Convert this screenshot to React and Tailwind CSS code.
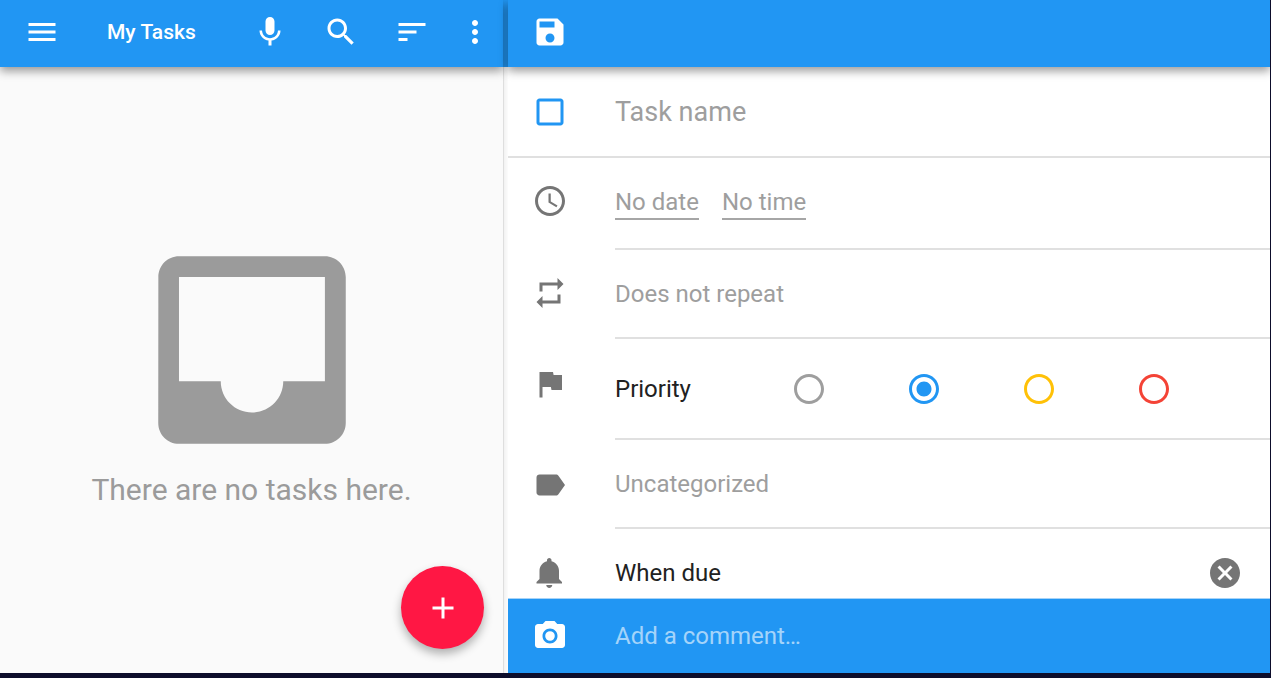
const PATHS = {
  menu: "M3 18h18v-2H3v2zm0-5h18v-2H3v2zm0-7v2h18V6H3z",
  mic: "M12 14c1.66 0 2.99-1.34 2.99-3L15 5c0-1.66-1.34-3-3-3S9 3.34 9 5v6c0 1.66 1.34 3 3 3zm5.3-3c0 3-2.54 5.1-5.3 5.1S6.7 14 6.7 11H5c0 3.41 2.72 6.23 6 6.72V21h2v-3.28c3.28-.48 6-3.3 6-6.72h-1.7z",
  search: "M15.5 14h-.79l-.28-.27C15.41 12.59 16 11.11 16 9.5 16 5.91 13.09 3 9.5 3S3 5.91 3 9.5 5.91 16 9.5 16c1.61 0 3.09-.59 4.23-1.57l.27.28v.79l5 4.99L20.49 19l-4.99-5zm-6 0C7.01 14 5 11.99 5 9.5S7.01 5 9.5 5 14 7.01 14 9.5 11.99 14 9.5 14z",
  sort: "M3 18h6v-2H3v2zM3 6v2h18V6H3zm0 7h12v-2H3v2z",
  more: "M12 8c1.1 0 2-.9 2-2s-.9-2-2-2-2 .9-2 2 .9 2 2 2zm0 2c-1.1 0-2 .9-2 2s.9 2 2 2 2-.9 2-2-.9-2-2-2zm0 6c-1.1 0-2 .9-2 2s.9 2 2 2 2-.9 2-2-.9-2-2-2z",
  save: "M17 3H5c-1.11 0-2 .9-2 2v14c0 1.1.89 2 2 2h14c1.1 0 2-.9 2-2V7l-4-4zm-5 16c-1.66 0-3-1.34-3-3s1.34-3 3-3 3 1.34 3 3-1.34 3-3 3zm3-10H5V5h10v4z",
  checkbox: "M19 5v14H5V5h14m0-2H5c-1.1 0-2 .9-2 2v14c0 1.1.9 2 2 2h14c1.1 0 2-.9 2-2V5c0-1.1-.9-2-2-2z",
  clock: "M11.99 2C6.47 2 2 6.48 2 12s4.47 10 9.99 10C17.52 22 22 17.52 22 12S17.52 2 11.99 2zM12 20c-4.42 0-8-3.58-8-8s3.58-8 8-8 8 3.58 8 8-3.58 8-8 8zm.5-13H11v6l5.25 3.15.75-1.23-4.5-2.67z",
  repeat: "M7 7h10v3l4-4-4-4v3H5v6h2V7zm10 10H7v-3l-4 4 4 4v-3h12v-6h-2v4z",
  flag: "M14.4 6L14 4H5v17h2v-7h5.6l.4 2h7V6z",
  label: "M17.63 5.84C17.27 5.33 16.67 5 16 5L5 5.01C3.9 5.01 3 5.9 3 7v10c0 1.1.9 1.99 2 1.99L16 19c.67 0 1.27-.33 1.63-.84L22 12l-4.37-6.16z",
  bell: "M11.5 22c1.1 0 2-.9 2-2h-4c0 1.1.9 2 2 2zm6.5-6v-5.5c0-3.07-2.13-5.64-5-6.32V3.5c0-.83-.67-1.5-1.5-1.5S10 2.67 10 3.5v.68c-2.87.68-5 3.25-5 6.32V16l-2 2v1h17v-1l-2-2z",
  camera: "M12 8.8a3.2 3.2 0 1 0 0 6.4 3.2 3.2 0 1 0 0-6.4zM9 2L7.17 4H4c-1.1 0-2 .9-2 2v12c0 1.1.9 2 2 2h16c1.1 0 2-.9 2-2V6c0-1.1-.9-2-2-2h-3.17L15 2H9zm3 15c-2.76 0-5-2.24-5-5s2.24-5 5-5 5 2.24 5 5-2.24 5-5 5z",
  cancel: "M12 2C6.47 2 2 6.47 2 12s4.47 10 10 10 10-4.47 10-10S17.53 2 12 2zm5 13.59L15.59 17 12 13.41 8.41 17 7 15.59 10.59 12 7 8.41 8.41 7 12 10.59 15.59 7 17 8.41 13.41 12 17 15.59z",
  radio: "M12 2C6.48 2 2 6.48 2 12s4.48 10 10 10 10-4.48 10-10S17.52 2 12 2zm0 18c-4.42 0-8-3.58-8-8s3.58-8 8-8 8 3.58 8 8-3.58 8-8 8z",
  radioOn: "M12 7c-2.76 0-5 2.24-5 5s2.24 5 5 5 5-2.24 5-5-2.24-5-5-5zm0-5C6.48 2 2 6.48 2 12s4.48 10 10 10 10-4.48 10-10S17.52 2 12 2zm0 18c-4.42 0-8-3.58-8-8s3.58-8 8-8 8 3.58 8 8-3.58 8-8 8z",
  add: "M19 13h-6v6h-2v-6H5v-2h6V5h2v6h6v2z",
  inbox: "M19 3H4.99c-1.11 0-1.98.9-1.98 2L3 19c0 1.1.88 2 1.99 2H19c1.1 0 2-.9 2-2V5c0-1.1-.9-2-2-2zm0 12h-4c0 1.66-1.35 3-3 3s-3-1.34-3-3H4.99V5H19v10z",
};

function Icon({ name, className = "size-9" }) {
  return (
    <svg viewBox="0 0 24 24" fill="currentColor" className={`block shrink-0 ${className}`} aria-hidden="true">
      <path d={PATHS[name]} />
    </svg>
  );
}

function Row({ icon, iconClass = "", className = "", children }) {
  return (
    <div className={`flex shrink-0 pl-6 ${className}`}>
      <div className={`flex w-[83px] shrink-0 items-center text-[#757575] ${iconClass}`}>
        <Icon name={icon} />
      </div>
      <div className="flex min-w-0 flex-1 items-center border-b-2 border-[#e0e0e0] text-2xl">
        {children}
      </div>
    </div>
  );
}

function TaskList() {
  return (
    <section className="flex w-[503px] shrink-0 flex-col bg-[#fafafa]">
      <header className="z-10 flex h-[67px] shrink-0 items-center bg-[#2196f3] pb-1 pl-6 text-white shadow-[0_4px_9px_rgba(0,0,0,0.4)]">
        <button aria-label="Menu"><Icon name="menu" /></button>
        <h1 className="ml-[47px] w-[145px] pt-0.5 text-[21px] font-medium">My Tasks</h1>
        <button aria-label="Voice"><Icon name="mic" /></button>
        <button aria-label="Search" className="ml-[35px]"><Icon name="search" /></button>
        <button aria-label="Sort" className="ml-[35px]"><Icon name="sort" /></button>
        <button aria-label="More" className="ml-[27px]"><Icon name="more" /></button>
      </header>
      <div className="relative flex flex-1 flex-col items-center pt-[158px] text-[#9b9b9b]">
        <Icon name="inbox" className="size-[250px]" />
        <p className="-mt-[3px] text-[30px] leading-9">There are no tasks here.</p>
        <button
          aria-label="New task"
          className="absolute right-[19px] bottom-6 flex size-[83px] items-center justify-center rounded-full bg-[#ff1744] text-white shadow-[0_5px_10px_rgba(0,0,0,0.3)]"
        >
          <Icon name="add" />
        </button>
      </div>
    </section>
  );
}

function TaskEditor() {
  return (
    <section className="flex min-w-0 flex-1 flex-col bg-white">
      <header className="z-10 flex h-[67px] shrink-0 items-center bg-[#2196f3] pb-1 pl-6 text-white shadow-[0_4px_9px_rgba(0,0,0,0.4)]">
        <button aria-label="Save"><Icon name="save" /></button>
      </header>
      <div className="flex h-[91px] shrink-0 items-center border-b-2 border-[#e0e0e0] pl-6">
        <Icon name="checkbox" className="size-9 text-[#2196f3]" />
        <span className="ml-[47px] pt-0.5 text-[27px] text-[#9e9e9e]">Task name</span>
      </div>
      <Row icon="clock" className="h-[92px]" iconClass="pb-1.5">
        <div className="flex gap-[23px] leading-8 text-[#9e9e9e]">
          <span className="border-b-2 border-[#a6a6a6]">No date</span>
          <span className="border-b-2 border-[#a6a6a6]">No time</span>
        </div>
      </Row>
      <Row icon="repeat" className="h-[89px]" iconClass="pb-1">
        <span className="text-[#9e9e9e]">Does not repeat</span>
      </Row>
      <Row icon="flag" className="h-[101px]" iconClass="pb-3">
        <span className="w-[176px] text-[#212121]">Priority</span>
        <div className="flex gap-[79px]">
          <Icon name="radio" className="size-9 text-[#9e9e9e]" />
          <Icon name="radioOn" className="size-9 text-[#2196f3]" />
          <Icon name="radio" className="size-9 text-[#ffc107]" />
          <Icon name="radio" className="size-9 text-[#f44336]" />
        </div>
      </Row>
      <Row icon="label" className="h-[89px]">
        <span className="text-[#9e9e9e]">Uncategorized</span>
      </Row>
      <div className="flex h-[70px] shrink-0 items-center border-b border-[#a6d3f8] pt-[18px] pl-6">
        <Icon name="bell" className="size-9 text-[#757575]" />
        <span className="ml-[47px] text-2xl text-[#212121]">When due</span>
        <button aria-label="Remove reminder" className="mr-[27px] ml-auto text-[#757575]">
          <Icon name="cancel" />
        </button>
      </div>
      <footer className="flex flex-1 items-center bg-[#2196f3] pl-6">
        <Icon name="camera" className="size-9 text-white" />
        <span className="ml-[47px] text-2xl text-white/60">Add a comment…</span>
      </footer>
    </section>
  );
}

export default function App() {
  return (
    <div className="h-[678px] w-[1271px] overflow-hidden bg-[#0d0d2b] pr-px pb-[5px] font-['Roboto',sans-serif]">
      <main className="flex h-full overflow-hidden">
        <TaskList />
        <div className="flex w-[5px] shrink-0 flex-col">
          <div className="h-[67px] shrink-0 bg-[#2196f3]" />
          <div className="flex-1 border-l border-[#dedede] bg-linear-to-r from-[#f2f2f2] to-[#fcfcfc]" />
        </div>
        <TaskEditor />
      </main>
    </div>
  );
}
